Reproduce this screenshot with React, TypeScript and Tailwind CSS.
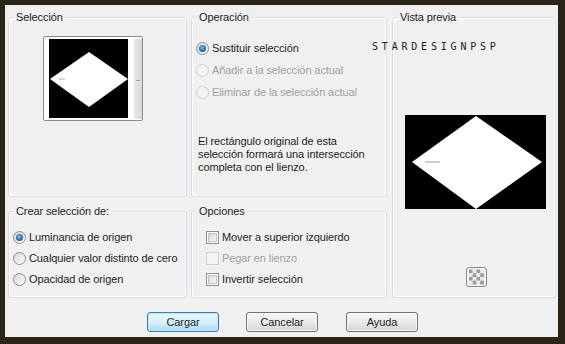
import React from "react";

function Radio({ checked = false, disabled = false }: { checked?: boolean; disabled?: boolean }) {
  return (
    <span
      className={`flex h-[13px] w-[13px] shrink-0 items-center justify-center rounded-full border ${
        disabled
          ? "border-[#cfcfcf] bg-[#f3f3f3]"
          : "border-[#8e8f8f] bg-linear-to-br from-[#d6d6d6] to-[#fcfcfc]"
      }`}
    >
      {checked && (
        <span className="h-[7px] w-[7px] rounded-full bg-[radial-gradient(circle_at_45%_40%,#8fd0f5_0%,#2c7cc0_45%,#123f70_100%)]" />
      )}
    </span>
  );
}

function Check({ disabled = false }: { disabled?: boolean }) {
  return (
    <span
      className={`flex h-[13px] w-[13px] shrink-0 items-center justify-center border ${
        disabled ? "border-[#d0d0d0] bg-[#f4f4f4]" : "border-[#8e8f8f] bg-white"
      }`}
    >
      {!disabled && <span className="h-[9px] w-[9px] border border-[#c4c4c4] bg-linear-to-br from-[#d8d8d8] to-[#f8f8f8]" />}
    </span>
  );
}

function Group({
  title,
  className,
  children,
}: {
  title: string;
  className: string;
  children?: React.ReactNode;
}) {
  return (
    <div
      className={`relative rounded-[3px] border border-[#d5dfe5] shadow-[inset_0_0_0_1px_#ffffff] ${className}`}
    >
      <span className="absolute -top-[9px] left-[5px] whitespace-nowrap bg-[#f0f0f0] px-[2px] leading-[16px] text-[#1e1e1e]">
        {title}
      </span>
      {children}
    </div>
  );
}

function Diamond() {
  return (
    <svg viewBox="0 0 141 94" className="h-full w-full" preserveAspectRatio="none">
      <rect x="0" y="0" width="141" height="94" fill="#000" />
      <polygon points="7,47 71,1 137,47 71,94" fill="#fff" />
      <line x1="20" y1="47" x2="35" y2="47" stroke="#9a9a9a" strokeWidth="1" />
    </svg>
  );
}

function SmallDiamond() {
  return (
    <svg viewBox="0 0 79 79" className="h-full w-full">
      <rect x="0" y="0" width="79" height="79" fill="#000" />
      <polygon points="1,40 40,13 79,40 40,68" fill="#fff" />
      <line x1="10" y1="40" x2="16" y2="40" stroke="#b0b0b0" strokeWidth="1" />
    </svg>
  );
}

function Checker() {
  const cells = [];
  for (let r = 0; r < 4; r++) {
    for (let c = 0; c < 4; c++) {
      cells.push(
        <rect
          key={`${r}-${c}`}
          x={3 + c * 3.75}
          y={2.5 + r * 3.75}
          width="3.75"
          height="3.75"
          fill={(r + c) % 2 === 0 ? "#9a9a9a" : "#e8e8e8"}
        />
      );
    }
  }
  return (
    <svg width="21" height="20" viewBox="0 0 21 20">
      <rect x="0.5" y="0.5" width="20" height="19" rx="2.5" fill="#f4f4f4" stroke="#8a8a8a" />
      {cells}
    </svg>
  );
}

function Btn({ label, primary = false }: { label: string; primary?: boolean }) {
  return (
    <div
      className={`flex h-[20px] w-[72px] items-center justify-center rounded-[3px] border ${
        primary
          ? "border-[#3c7fb1] bg-linear-to-b from-[#eaf6fd] via-[#d9f0fc] to-[#a7d9f5] shadow-[inset_0_0_0_1px_#bfe6fb]"
          : "border-[#707070] bg-linear-to-b from-[#f4f4f4] via-[#ebebeb] to-[#d4d4d4] shadow-[inset_0_0_0_1px_#fbfbfb]"
      } text-[#1e1e1e]`}
    >
      {label}
    </div>
  );
}

export default function App() {
  return (
    <div className="h-[344px] w-[565px] bg-[#2b2419] pb-[7px] pl-[5px] pr-[7px] pt-[5px] font-['Liberation_Sans',Arial,sans-serif] text-[11px] tracking-[-0.1px] text-[#1e1e1e]">
      <div className="relative h-full w-full whitespace-nowrap bg-[#f0f0f0] pb-[5px] pl-[3px] pr-[2px] pt-[12px]">
        <div className="flex h-[281px]">
          {/* left column */}
          <div className="flex w-[179px] flex-col gap-[14px]">
            <Group title="Selección" className="h-[180px] pl-[34px] pt-[18px]">
              <div className="flex h-[85px] w-[100px] rounded-[2px] border border-[#8a8a8a] bg-white pl-[5px] pt-[2px]">
                <div className="h-[79px] w-[79px]">
                  <SmallDiamond />
                </div>
                <div className="relative ml-[6px] h-[80px] w-[8px] bg-linear-to-r from-[#e6e6e6] to-[#d9d9d9]">
                  <span className="absolute left-[2px] top-[41px] h-[1px] w-[4px] bg-[#a0a0a0]" />
                </div>
              </div>
            </Group>
            <Group title="Crear selección de:" className="h-[87px] pl-[4px] pt-[15px]">
              <div className="flex h-[21px] items-center gap-[3px]">
                <Radio checked />
                <span>Luminancia de origen</span>
              </div>
              <div className="flex h-[21px] items-center gap-[3px]">
                <Radio />
                <span>Cualquier valor distinto de cero</span>
              </div>
              <div className="flex h-[21px] items-center gap-[3px]">
                <Radio />
                <span>Opacidad de origen</span>
              </div>
            </Group>
          </div>

          {/* middle column */}
          <div className="ml-[4px] flex w-[196px] flex-col gap-[14px]">
            <Group title="Operación" className="h-[180px] pl-[4px] pt-[19px]">
              <div className="flex h-[22px] items-center gap-[3px]">
                <Radio checked />
                <span>Sustituir selección</span>
              </div>
              <div className="flex h-[22px] items-center gap-[3px] text-[#a0a0a0]">
                <Radio disabled />
                <span>Añadir a la selección actual</span>
              </div>
              <div className="flex h-[22px] items-center gap-[3px] text-[#a0a0a0]">
                <Radio disabled />
                <span>Eliminar de la selección actual</span>
              </div>
              <p className="mt-[32px] pl-[2px] leading-[13px]">
                El rectángulo original de esta
                <br />
                selección formará una intersección
                <br />
                completa con el lienzo.
              </p>
            </Group>
            <Group title="Opciones" className="h-[87px] pl-[14px] pt-[15px]">
              <div className="flex h-[21px] items-center gap-[3px]">
                <Check />
                <span>Mover a superior izquierdo</span>
              </div>
              <div className="flex h-[21px] items-center gap-[3px] text-[#a0a0a0]">
                <Check disabled />
                <span>Pegar en lienzo</span>
              </div>
              <div className="flex h-[21px] items-center gap-[3px]">
                <Check />
                <span>Invertir selección</span>
              </div>
            </Group>
          </div>

          {/* right column */}
          <Group title="Vista previa" className="ml-[5px] flex h-full w-[164px] flex-col pl-[12px] pt-[97px]">
            <div className="h-[94px] w-[141px]">
              <Diamond />
            </div>
            <div className="ml-[61px] mt-[58px]">
              <Checker />
            </div>
          </Group>
        </div>

        {/* buttons */}
        <div className="ml-[139px] mt-[14px] flex h-[20px] gap-[27px]">
          <Btn label="Cargar" primary />
          <Btn label="Cancelar" />
          <div className="ml-[1px]">
            <Btn label="Ayuda" />
          </div>
        </div>

        {/* watermark */}
        <span className="absolute left-[367px] top-[37px] font-['DejaVu_Sans_Mono',monospace] text-[10px] leading-[10px] tracking-[3.8px] text-[#222]">
          STARDESIGNPSP
        </span>
      </div>
    </div>
  );
}
